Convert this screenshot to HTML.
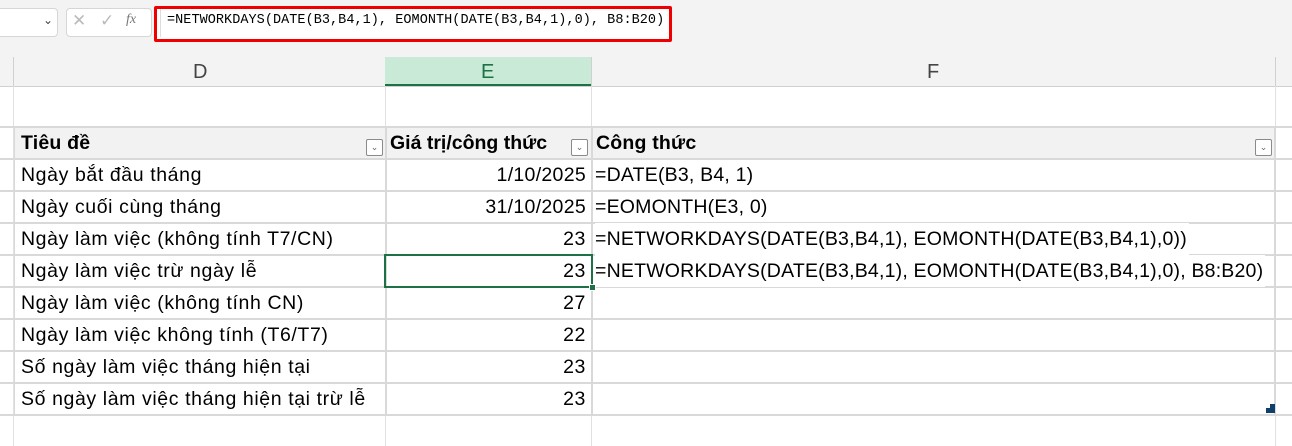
<!DOCTYPE html>
<html><head><meta charset="utf-8"><style>
body{margin:0;width:1292px;height:446px;overflow:hidden;background:#fff;font-family:"Liberation Sans",sans-serif;position:relative}
.abs{position:absolute}
.top{left:0;top:0;width:1292px;height:57px;background:#f3f3f3}
.cell{position:absolute;font-size:19.5px;color:#000;line-height:32px;white-space:nowrap;letter-spacing:0.6px}
.f{letter-spacing:0.2px}
.h{left:0;width:1292px;height:2px;background:#d9d9d9}
.v{top:86px;width:1px;height:360px;background:#e1e1e1}
.dd{position:absolute;width:15px;height:15px;border:1px solid #8a8a8a;border-radius:2px;background:#fff;font-size:9px;color:#666;text-align:center;line-height:14px}
</style></head><body>
<div class="abs top"></div>
<div class="abs" style="left:-4px;top:8px;width:60px;height:27px;background:#fff;border:1px solid #d6d6d6;border-radius:4px"></div>
<div class="abs" style="left:43px;top:13px;font-size:12px;color:#444">&#8964;</div>
<div class="abs" style="left:66px;top:8px;width:84px;height:27px;background:#fff;border:1px solid #d6d6d6;border-radius:4px"></div>
<div class="abs" style="left:72px;top:11px;font-size:17px;color:#bbb">✕</div>
<div class="abs" style="left:100px;top:11px;font-size:17px;color:#bbb">✓</div>
<div class="abs" style="left:126px;top:12px;font-size:14px;color:#777;font-style:italic;font-family:'Liberation Serif',serif">fx</div>
<div class="abs" style="left:154px;top:6px;width:512px;height:30px;border:3px solid #ee0000;border-radius:2px;background:#fff"></div>
<div class="abs" style="left:160px;top:9px;width:506px;height:28px;border-left:1px solid #ddd"></div>
<div class="abs" style="left:167px;top:13px;font-family:'Liberation Mono',monospace;font-size:13.5px;color:#000;letter-spacing:0.05px">=NETWORKDAYS(DATE(B3,B4,1), EOMONTH(DATE(B3,B4,1),0), B8:B20)</div>
<!-- column headers -->
<div class="abs" style="left:0;top:57px;width:1292px;height:29px;background:#f3f3f3;border-bottom:1px solid #d0d0d0"></div>
<div class="abs" style="left:13px;top:57px;width:1px;height:29px;background:#d0d0d0"></div>
<div class="abs" style="left:385px;top:57px;width:206px;height:27px;background:#caead8;border-bottom:2px solid #1e7145"></div>
<div class="abs" style="left:591px;top:57px;width:1px;height:29px;background:#d0d0d0"></div>
<div class="abs" style="left:1275px;top:57px;width:1px;height:29px;background:#d0d0d0"></div>
<div class="abs" style="left:193px;top:61px;font-size:20px;color:#444">D</div>
<div class="abs" style="left:481px;top:61px;font-size:20px;color:#1e7145">E</div>
<div class="abs" style="left:927px;top:61px;font-size:20px;color:#444">F</div>
<div class="abs v" style="left:13px"></div>
<div class="abs v" style="left:385px"></div>
<div class="abs v" style="left:591px"></div>
<div class="abs v" style="left:1275px"></div>
<div class="abs" style="left:14px;top:127px;width:1261px;height:32px;background:#f2f2f2"></div>
<div class="abs h" style="top:126px"></div>
<div class="abs h" style="top:158px"></div>
<div class="abs h" style="top:190px"></div>
<div class="abs h" style="top:222px"></div>
<div class="abs h" style="top:254px"></div>
<div class="abs h" style="top:286px"></div>
<div class="abs h" style="top:318px"></div>
<div class="abs h" style="top:350px"></div>
<div class="abs h" style="top:382px"></div>
<div class="abs h" style="top:414px"></div>
<div class="abs" style="left:14px;top:126px;width:1px;height:290px;background:#d9d9d9"></div>
<div class="abs" style="left:1274px;top:126px;width:2px;height:290px;background:#d9d9d9"></div>
<div class="abs" style="left:385px;top:126px;width:2px;height:290px;background:#d9d9d9"></div>
<div class="abs" style="left:591px;top:126px;width:2px;height:290px;background:#d9d9d9"></div>

<div class="cell" style="left:21px;top:127px;font-weight:bold;letter-spacing:0.2px">Tiêu đề</div>
<div class="cell" style="left:390px;top:127px;font-weight:bold;letter-spacing:0px">Giá trị/công thức</div>
<div class="cell" style="left:596px;top:127px;font-weight:bold;letter-spacing:0.2px">Công thức</div>
<div class="dd" style="left:366px;top:139px">&#8964;</div>
<div class="dd" style="left:571px;top:139px">&#8964;</div>
<div class="dd" style="left:1255px;top:139px">&#8964;</div>

<div class="cell" style="left:21px;top:159px">Ngày bắt đầu tháng</div>
<div class="cell" style="left:21px;top:191px">Ngày cuối cùng tháng</div>
<div class="cell" style="left:21px;top:223px">Ngày làm việc (không tính T7/CN)</div>
<div class="cell" style="left:21px;top:255px">Ngày làm việc trừ ngày lễ</div>
<div class="cell" style="left:21px;top:287px">Ngày làm việc (không tính CN)</div>
<div class="cell" style="left:21px;top:319px">Ngày làm việc không tính (T6/T7)</div>
<div class="cell" style="left:21px;top:351px">Số ngày làm việc tháng hiện tại</div>
<div class="cell" style="left:21px;top:383px">Số ngày làm việc tháng hiện tại trừ lễ</div>

<div class="cell" style="right:706px;top:159px;letter-spacing:0.3px">1/10/2025</div>
<div class="cell" style="right:706px;top:191px;letter-spacing:0.3px">31/10/2025</div>
<div class="cell" style="right:706px;top:223px">23</div>
<div class="cell" style="right:706px;top:255px">23</div>
<div class="cell" style="right:706px;top:287px">27</div>
<div class="cell" style="right:706px;top:319px">22</div>
<div class="cell" style="right:706px;top:351px">23</div>
<div class="cell" style="right:706px;top:383px">23</div>

<div class="cell f" style="left:595px;top:159px">=DATE(B3, B4, 1)</div>
<div class="cell f" style="left:595px;top:191px">=EOMONTH(E3, 0)</div>
<div class="cell f" style="left:595px;top:223px;background:#fff;padding-right:2px">=NETWORKDAYS(DATE(B3,B4,1), EOMONTH(DATE(B3,B4,1),0))</div>
<div class="cell f" style="left:595px;top:255px;background:#fff;padding-right:2px">=NETWORKDAYS(DATE(B3,B4,1), EOMONTH(DATE(B3,B4,1),0), B8:B20)</div>

<div class="abs" style="left:384px;top:254px;width:205px;height:30px;border:2px solid #1e7145"></div>
<div class="abs" style="left:589px;top:284px;width:5px;height:5px;background:#1e7145;border:1px solid #fff"></div>
<div class="abs" style="left:1266px;top:404px;width:9px;height:9px;background:#0f3f6b"></div>
<div class="abs" style="left:1266px;top:404px;width:4px;height:4px;background:#fff"></div>
</body></html>
